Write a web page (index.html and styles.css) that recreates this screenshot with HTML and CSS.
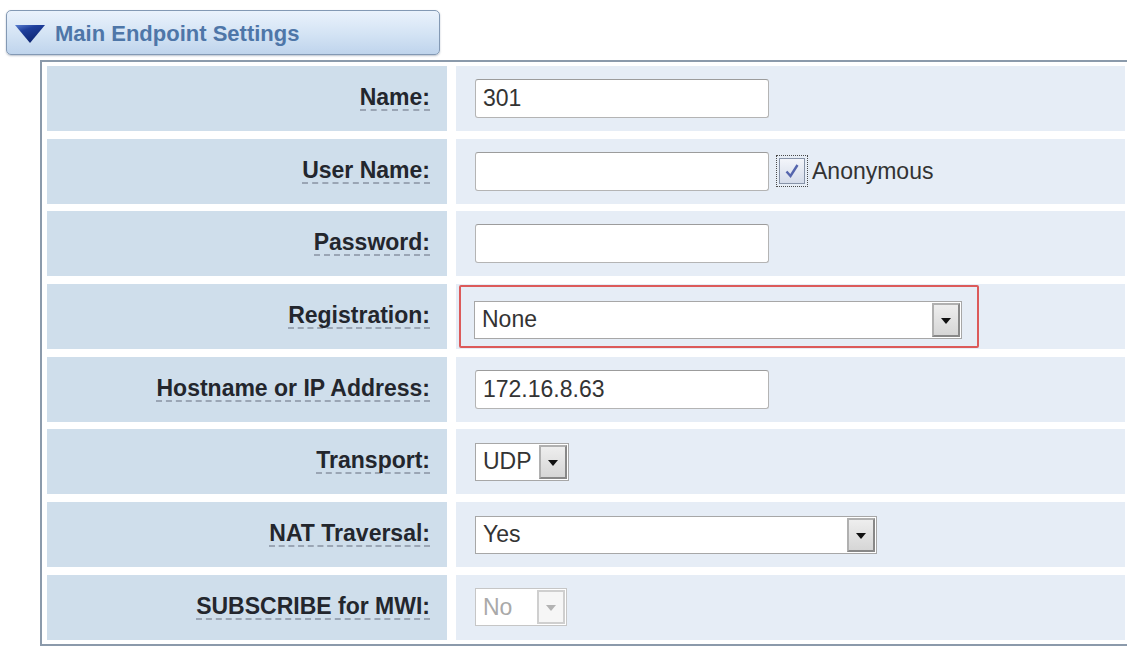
FILE: index.html
```html
<!DOCTYPE html>
<html lang="en">

<head>
    <meta charset="UTF-8">
    <title>Main Endpoint Settings</title>
    <link rel="stylesheet" href="styles.css">
</head>

<body>
    <div class="section-head">
        <svg class="toggle" width="30" height="18" viewBox="0 0 30 18">
            <defs>
                <linearGradient id="tri" x1="0" y1="0" x2="0.6" y2="1">
                    <stop offset="0" stop-color="#5a7fd0"/>
                    <stop offset="0.35" stop-color="#1f3f9c"/>
                    <stop offset="1" stop-color="#0c2470"/>
                </linearGradient>
            </defs>
            <polygon points="0,0 30,0 15,18" fill="url(#tri)"/>
        </svg>
        <span class="section-title">Main Endpoint Settings</span>
    </div>

    <div class="settings">
        <div class="label"><span>Name:</span></div>
        <div class="field">
            <input class="text" type="text" value="301">
        </div>

        <div class="label"><span>User Name:</span></div>
        <div class="field">
            <input class="text" type="text" value="">
            <label class="check">
                <span class="check-box">
                    <svg width="18" height="18" viewBox="0 0 18 18">
                        <path d="M3.5 9.5 L7.5 14 L14.5 3" fill="none" stroke="#5565ad" stroke-width="2.4"/>
                    </svg>
                </span>
                Anonymous
            </label>
        </div>

        <div class="label"><span>Password:</span></div>
        <div class="field">
            <input class="text" type="password" value="">
        </div>

        <div class="label"><span>Registration:</span></div>
        <div class="field">
            <div class="highlight">
                <div class="select w-488"><span class="value">None</span><span class="arrow"></span></div>
            </div>
        </div>

        <div class="label"><span>Hostname or IP Address:</span></div>
        <div class="field">
            <input class="text" type="text" value="172.16.8.63">
        </div>

        <div class="label"><span>Transport:</span></div>
        <div class="field">
            <div class="select w-94"><span class="value">UDP</span><span class="arrow"></span></div>
        </div>

        <div class="label"><span>NAT Traversal:</span></div>
        <div class="field">
            <div class="select w-402"><span class="value">Yes</span><span class="arrow"></span></div>
        </div>

        <div class="label"><span>SUBSCRIBE for MWI:</span></div>
        <div class="field">
            <div class="select w-92 disabled"><span class="value">No</span><span class="arrow"></span></div>
        </div>
    </div>
</body>

</html>
```

FILE: styles.css
```css
html {
    background: #ffffff;
    font-family: "Liberation Sans", Arial, Helvetica, sans-serif;
}

body {
    margin: 0;
    padding: 0;
}

div.section-head {
    display: flex;
    align-items: center;
    box-sizing: border-box;
    width: 434px;
    height: 45px;
    margin: 10px 0 0 6px;
    padding: 2px 0 0 8px;
    border: 1px solid #8399b4;
    border-radius: 5px;
    background: linear-gradient(#eaf2fc, #d3e3f4 55%, #bfd4ec);
    box-shadow: 0 1px 2px rgba(60, 80, 110, 0.35);
}

svg.toggle {
    margin-right: 10px;
}

span.section-title {
    color: #4e76a8;
    font-weight: bold;
    font-size: 22px;
}

div.settings {
    display: grid;
    grid-template-columns: 400px 1fr;
    grid-auto-rows: 65px;
    gap: 7.7px 9px;
    box-sizing: border-box;
    width: 1087px;
    margin: 5px 0 0 40px;
    padding: 4px 2px 4px 5px;
    border: 2px solid #8b9aab;
    border-right: 0;
}

div.label {
    display: flex;
    justify-content: flex-end;
    align-items: center;
    padding-right: 17px;
    background: #cfdeeb;
}

div.label>span {
    font-weight: bold;
    font-size: 23px;
    line-height: 1;
    color: #23262d;
    border-bottom: 2px dashed #9aa5b4;
}

div.field {
    display: flex;
    align-items: center;
    padding-left: 19px;
    background: #e6edf6;
}

input.text {
    box-sizing: border-box;
    width: 294px;
    height: 39px;
    margin: 0;
    padding: 0 7px;
    border: 1px solid #b4b4b4;
    border-top-color: #9c9c9c;
    border-radius: 3px;
    background: #ffffff;
    font-family: inherit;
    font-size: 23px;
    color: #333333;
    outline: none;
}

label.check {
    display: flex;
    align-items: center;
    margin-left: 10px;
    font-size: 23px;
    color: #333333;
}

span.check-box {
    display: flex;
    align-items: center;
    justify-content: center;
    box-sizing: border-box;
    width: 26px;
    height: 26px;
    margin-right: 7px;
    outline: 1px dotted #4a4a4a;
    outline-offset: 2px;
    border: 1px solid #8793a8;
    background: linear-gradient(#f3f5fa, #d5dcea);
}

div.highlight {
    display: flex;
    align-items: center;
    box-sizing: border-box;
    width: 520px;
    height: 63px;
    margin-left: -16px;
    padding: 6px 0 0 13px;
    border: 2px solid #dc5a5a;
    border-radius: 2px;
}

div.select {
    display: flex;
    box-sizing: border-box;
    height: 38px;
    border: 1px solid #a7a7a7;
    background: #ffffff;
    font-size: 23px;
    color: #333333;
}

div.w-488 { width: 488px; }
div.w-94  { width: 94px; }
div.w-402 { width: 402px; }
div.w-92  { width: 92px; }

div.select>span.value {
    flex: 1;
    align-self: center;
    padding-left: 7px;
}

div.select>span.arrow {
    display: flex;
    align-items: center;
    justify-content: center;
    box-sizing: border-box;
    width: 28px;
    margin: 1px;
    border: 2px solid;
    border-color: #b0b0b0 #888888 #888888 #b0b0b0;
    background: linear-gradient(#eeeeee, #d6d6d6);
}

div.select>span.arrow::before {
    content: "";
    margin-top: 2px;
    border-left: 5px solid transparent;
    border-right: 5px solid transparent;
    border-top: 6px solid #111111;
}

div.select.disabled {
    border-color: #c6c6c6;
    color: #a9a9a9;
}

div.select.disabled>span.arrow {
    border-color: #cfcfcf;
    background: #f6f6f6;
}

div.select.disabled>span.arrow::before {
    border-top-color: #b3b3b3;
}
```
